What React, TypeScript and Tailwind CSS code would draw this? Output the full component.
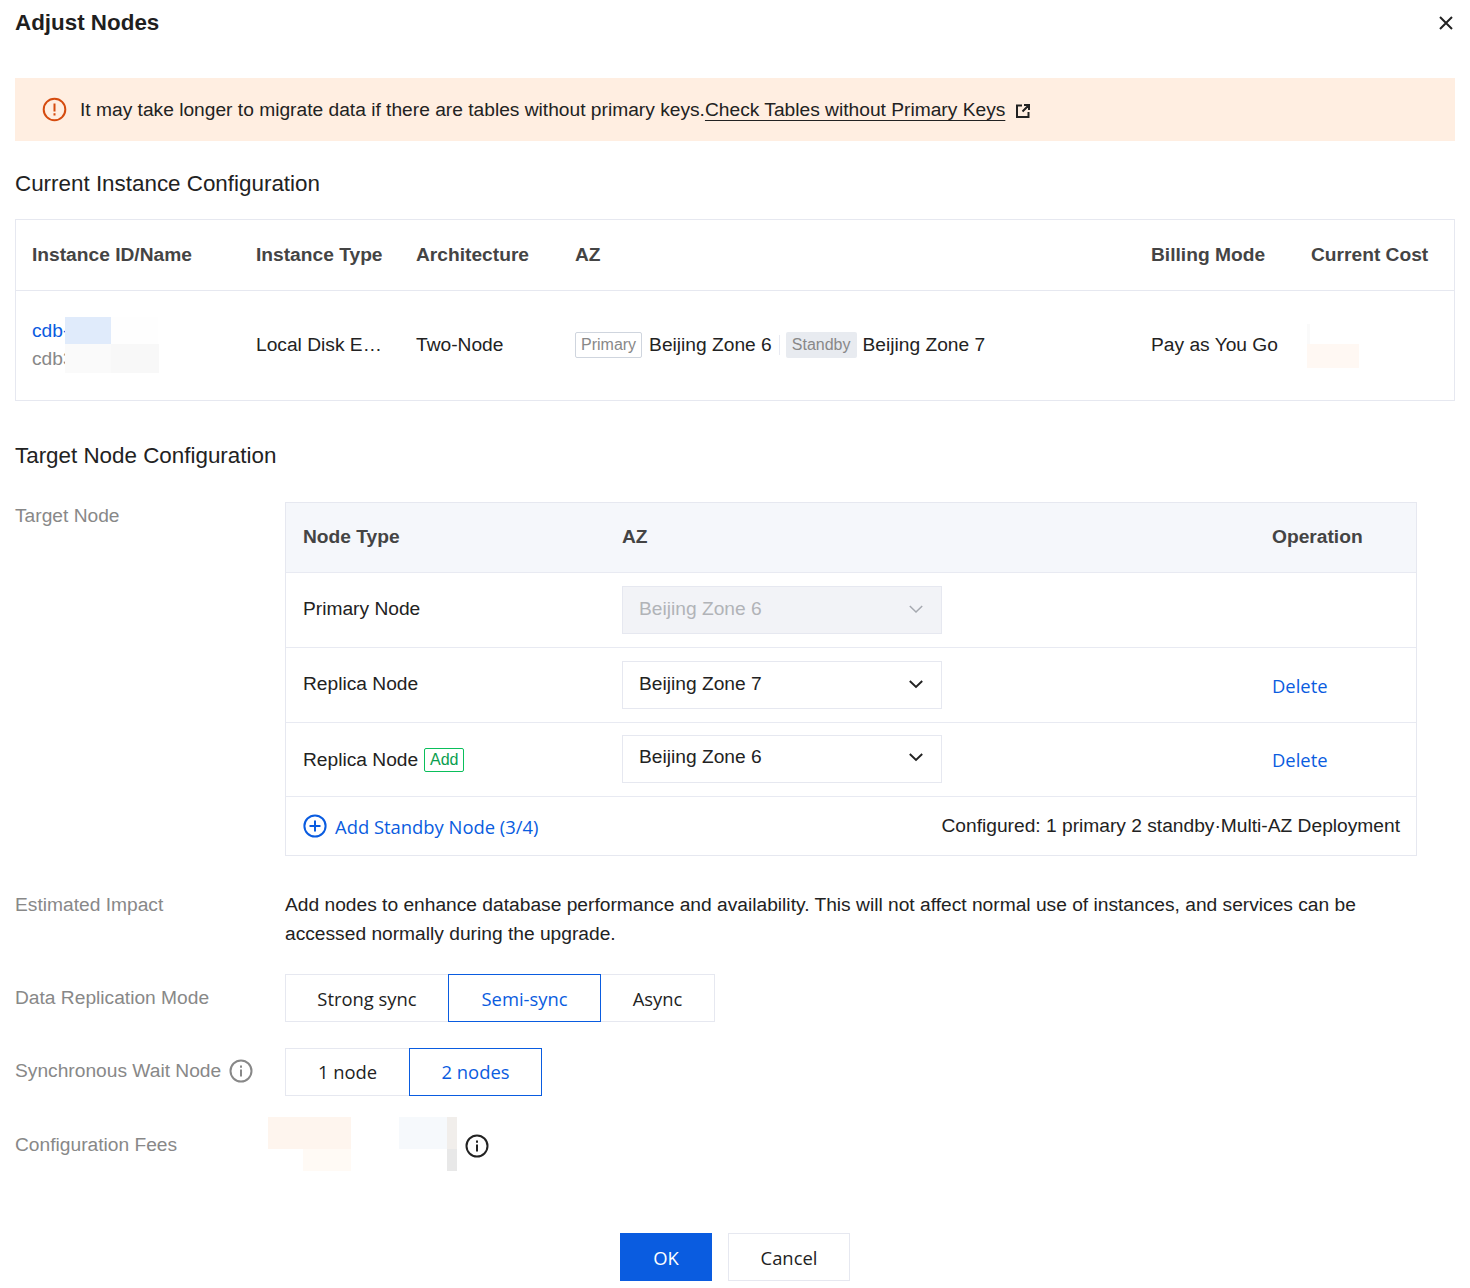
import { ReactNode } from "react";

const SANS = "font-['Liberation_Sans',Arial,sans-serif]";
const UI = "font-['Open_Sans','Noto_Sans',sans-serif]";

function Chevron({ muted }: { muted?: boolean }) {
    return (
        <svg className="mt-[-1px]" width="16" height="16" viewBox="0 0 16 16" fill="none" stroke={muted ? "#a6a9b0" : "#222"} strokeWidth={muted ? 1.5 : 1.9}>
            <path d="M1.8 5 8 11l6.2-6" />
        </svg>
    );
}

function InfoIcon({ color }: { color: string }) {
    return (
        <svg width="24" height="24" viewBox="0 0 24 24" fill="none" stroke={color} strokeWidth="2">
            <circle cx="12" cy="12" r="10.5" />
            <path d="M12 10.5v7" />
            <path d="M12 6.5v2.2" />
        </svg>
    );
}

function ZoneSelect({ label, disabled }: { label: string; disabled?: boolean }) {
    return (
        <div className={`flex h-12 w-80 items-center justify-between border border-[#e6e8f0] pb-[2px] pl-4 pr-[17px] text-[19.2px] ${disabled ? "bg-[#f2f3f7] text-[#b1b3b8]" : "bg-white text-[#222]"}`}>
            <span>{label}</span>
            <Chevron muted={disabled} />
        </div>
    );
}

function NodeRow({ height, name, children, del }: { height: string; name: ReactNode; children: ReactNode; del?: boolean }) {
    return (
        <div className={`grid ${height} grid-cols-[320px_650px_1fr] items-center border-t border-[#e8eaf2]`}>
            <div className="pb-[1px] pl-[17px] text-[19.2px] text-[#222]">{name}</div>
            <div className="pl-4">{children}</div>
            <div className={`pl-4 pt-0.5 text-[18.4px] text-[#0a5ce0] ${UI}`}>{del ? "Delete" : ""}</div>
        </div>
    );
}

function FormRow({ label, children, className }: { label: ReactNode; children: ReactNode; className?: string }) {
    return (
        <div className={`flex ${className ?? ""}`}>
            <div className="w-[270px] shrink-0 text-[19.2px] text-[#888]">{label}</div>
            <div className="min-w-0 flex-1">{children}</div>
        </div>
    );
}

function Segment({ label, width, active, compact }: { label: string; width: string; active?: boolean; compact?: boolean }) {
    return (
        <div className={`flex h-12 items-center justify-center border text-[18.4px] ${compact ? "" : "pt-0.5"} ${UI} ${width} ${active ? "relative z-10 -mx-px border-[#0a5ce0] text-[#0a5ce0]" : "border-[#e6e8f0] text-[#222]"}`}>
            {label}
        </div>
    );
}

export default function App() {
    return (
        <div className={`relative h-[1288px] w-[1470px] overflow-hidden bg-white px-[15px] ${SANS}`}>
            <header className="flex h-[78px] items-start justify-between pt-[7px]">
                <h1 className="text-[22.4px] font-bold leading-[32px] text-[#1f1f1f]">Adjust Nodes</h1>
                <svg className="mr-[1px] mt-[8px]" width="16" height="16" viewBox="0 0 16 16" fill="none" stroke="#222" strokeWidth="2">
                    <path d="m2 2 12 12M14 2 2 14" />
                </svg>
            </header>

            <div className="flex h-[63px] items-center bg-[#ffeee1] pl-[27px] text-[19.2px] text-[#222]">
                <svg width="25" height="25" viewBox="0 0 25 25" fill="none" stroke="#d54b0f" strokeWidth="2">
                    <circle cx="12.5" cy="12.5" r="10.8" />
                    <path d="M12.5 6.5v8M12.5 16.2v2.2" />
                </svg>
                <span className="ml-[13px] pt-[2px]">It may take longer to migrate data if there are tables without primary keys.</span>
                <span className="pt-[2px] underline underline-offset-4">Check Tables without Primary Keys</span>
                <svg className="ml-[10px] mt-0.5" width="16" height="16" viewBox="0 0 16 16" fill="none" stroke="#222" strokeWidth="2">
                    <path d="M7 2.5H2v11.5h11.5V9M9 2h5v5M14 2 7.5 8.5" />
                </svg>
            </div>

            <h2 className="mt-[28px] text-[22.4px] leading-[30px] text-[#222]">Current Instance Configuration</h2>

            <div className="mt-[20px] h-[182px] border border-[#e6e8f0] text-[19.2px]">
                <div className="grid h-[70px] grid-cols-[224px_160px_159px_576px_160px_1fr] items-center font-bold text-[#444]">
                    <div className="pl-4">Instance ID/Name</div>
                    <div className="pl-4">Instance Type</div>
                    <div className="pl-4">Architecture</div>
                    <div className="pl-4">AZ</div>
                    <div className="pl-4">Billing Mode</div>
                    <div className="pl-4">Current Cost</div>
                </div>
                <div className="grid h-[110px] grid-cols-[224px_160px_159px_576px_160px_1fr] items-center border-t border-[#e6e8f0] pb-[1px] text-[#222]">
                    <div className="flex flex-col pl-4 leading-[27px]">
                        <div className="flex items-center">
                            <span className="text-[#0a5ce0]">cdb-</span>
                            <span className="relative -ml-[4px] h-[27px] w-[46px] bg-[#e0ebfb]" />
                            <span className="h-[27px] w-[47px] bg-[#fefefe]" />
                        </div>
                        <div className="flex items-center">
                            <span className="text-[#888]">cdb3</span>
                            <span className="relative -ml-[9px] h-[29px] w-[46px] bg-[#fafafa]" />
                            <span className="h-[29px] w-[48px] bg-[#f8f8f8]" />
                        </div>
                    </div>
                    <div className="whitespace-nowrap pl-4">Local Disk E…</div>
                    <div className="pl-4">Two-Node</div>
                    <div className="flex items-center pl-4">
                        <span className="flex h-[26px] items-center rounded-[2px] border border-[#cfd5de] px-[5px] text-[16px] text-[#888]">Primary</span>
                        <span className="ml-[7px]">Beijing Zone 6</span>
                        <span className="ml-[7px] mr-[6px] h-[20px] w-px bg-[#e8eaf2]" />
                        <span className="flex h-[26px] items-center rounded-[2px] bg-[#e8ebf0] px-[6px] text-[16px] text-[#888]">Standby</span>
                        <span className="ml-[6px]">Beijing Zone 7</span>
                    </div>
                    <div className="pl-4">Pay as You Go</div>
                    <div className="ml-[12px] flex flex-col self-center pt-[2px]">
                        <span className="h-5 w-[3px] bg-[#fafafa]" />
                        <span className="h-6 w-[52px] bg-[#fff8f3]" />
                    </div>
                </div>
            </div>

            <h2 className="mt-[40px] text-[22.4px] leading-[30px] text-[#222]">Target Node Configuration</h2>

            <FormRow label={<span className="block leading-[27px]">Target Node</span>} className="mt-[31px]">
                <div className="w-[1132px] border border-[#e6e8f0]">
                    <div className="grid h-[69px] grid-cols-[320px_650px_1fr] items-center bg-[#f5f7fb] pb-[1px] text-[19.2px] font-bold text-[#444]">
                        <div className="pl-[17px]">Node Type</div>
                        <div className="pl-4">AZ</div>
                        <div className="pl-4">Operation</div>
                    </div>
                    <NodeRow height="h-[75px]" name="Primary Node">
                        <ZoneSelect label="Beijing Zone 6" disabled />
                    </NodeRow>
                    <NodeRow height="h-[75px]" name="Replica Node" del>
                        <ZoneSelect label="Beijing Zone 7" />
                    </NodeRow>
                    <NodeRow
                        height="h-[74px] pb-[2px]"
                        name={
                            <span className="mt-[5px] flex items-center">
                                Replica Node
                                <span className="ml-[6px] flex h-6 w-10 items-center justify-center rounded-[2px] border border-[#0abf5b] text-[16px] text-[#0a9e4e]">Add</span>
                            </span>
                        }
                        del
                    >
                        <ZoneSelect label="Beijing Zone 6" />
                    </NodeRow>
                    <div className="flex h-[59px] items-center justify-between border-t border-[#e8eaf2] pl-[17px] pr-4">
                        <div className={`flex items-center text-[18.4px] text-[#0a5ce0] ${UI}`}>
                            <svg width="24" height="24" viewBox="0 0 24 24" fill="none" stroke="#0a5ce0" strokeWidth="2">
                                <circle cx="12" cy="12" r="10.6" />
                                <path d="M6.5 12h11M12 6.5v11" />
                            </svg>
                            <span className="ml-2 pt-0.5">Add Standby Node (3/4)</span>
                        </div>
                        <div className="text-[19.2px] text-[#222]">Configured: 1 primary 2 standby·Multi-AZ Deployment</div>
                    </div>
                </div>
            </FormRow>

            <FormRow label={<span className="leading-[29px]">Estimated Impact</span>} className="mt-[34px]">
                <p className="w-[1100px] text-[19.2px] leading-[29px] text-[#222]">
                    Add nodes to enhance database performance and availability. This will not affect normal use of instances, and services can be accessed normally during the upgrade.
                </p>
            </FormRow>

            <FormRow label={<span className="block pt-[9px] leading-[29px]">Data Replication Mode</span>} className="mt-[26px]">
                <div className="flex">
                    <Segment label="Strong sync" width="w-[164px]" />
                    <Segment label="Semi-sync" width="w-[153px]" active />
                    <Segment label="Async" width="w-[115px]" />
                </div>
            </FormRow>

            <FormRow
                label={
                    <span className="flex items-center pt-[8px] leading-[29px]">
                        Synchronous Wait Node
                        <span className="ml-2"><InfoIcon color="#888" /></span>
                    </span>
                }
                className="mt-[26px]"
            >
                <div className="flex">
                    <Segment label="1 node" width="w-[125px]" compact />
                    <Segment label="2 nodes" width="w-[133px]" active compact />
                </div>
            </FormRow>

            <FormRow label={<span className="block pt-[13px] leading-[29px]">Configuration Fees</span>} className="mt-[21px]">
                <div className="-ml-[17px] flex h-[54px] items-start">
                    <div className="flex w-[83px] flex-col items-end">
                        <span className="h-8 w-[83px] bg-[#fef5ee]" />
                        <span className="h-[22px] w-[48px] bg-[#fffaf5]" />
                    </div>
                    <span className="ml-12 h-8 w-[48px] bg-[#f6f9fc]" />
                    <div className="flex w-[10px] flex-col">
                        <span className="h-8 bg-[#f1eeeb]" />
                        <span className="h-[22px] bg-[#e8e8e8]" />
                    </div>
                    <span className="ml-2 mt-[17px]"><InfoIcon color="#222" /></span>
                </div>
            </FormRow>

            <footer className={`mt-[62px] flex justify-center gap-4 text-[18.4px] ${UI}`}>
                <div className="flex h-12 w-[92px] items-center justify-center bg-[#0a5ce0] pt-0.5 text-white">OK</div>
                <div className="flex h-12 w-[122px] items-center justify-center border border-[#e6e8f0] pt-0.5 text-[#222]">Cancel</div>
            </footer>
        </div>
    );
}
